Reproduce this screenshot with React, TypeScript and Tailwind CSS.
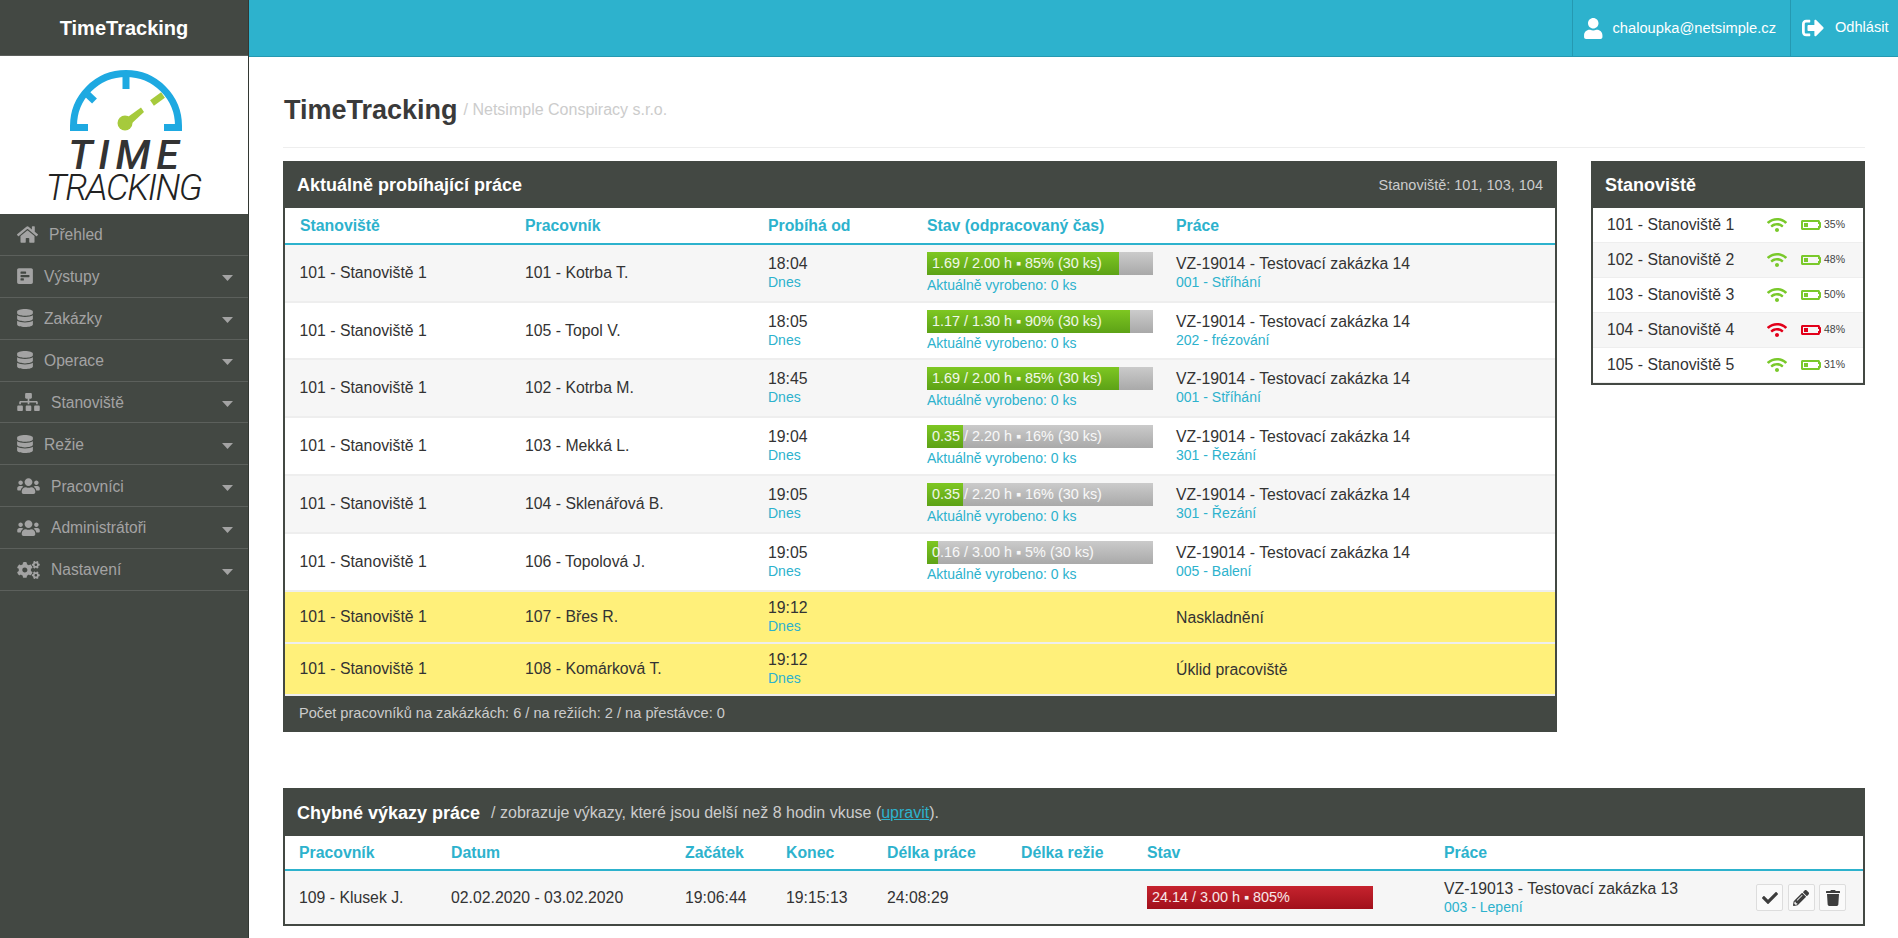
import React from "react";
import { FaHome, FaPollH, FaDatabase, FaSitemap, FaUsers, FaCogs, FaUser, FaSignOutAlt, FaWifi, FaBatteryQuarter, FaCheck, FaPencilAlt, FaTrash } from "react-icons/fa";

const menu: { label: string; Icon: React.ComponentType<{ className?: string }>; iconClass: string; caret: boolean }[] = [
  { label: "Přehled", Icon: FaHome, iconClass: "w-[21px] h-[19px]", caret: false },
  { label: "Výstupy", Icon: FaPollH, iconClass: "w-[16px] h-[18px]", caret: true },
  { label: "Zakázky", Icon: FaDatabase, iconClass: "w-[16px] h-[18px]", caret: true },
  { label: "Operace", Icon: FaDatabase, iconClass: "w-[16px] h-[18px]", caret: true },
  { label: "Stanoviště", Icon: FaSitemap, iconClass: "w-[23px] h-[18px]", caret: true },
  { label: "Režie", Icon: FaDatabase, iconClass: "w-[16px] h-[18px]", caret: true },
  { label: "Pracovníci", Icon: FaUsers, iconClass: "w-[23px] h-[18px]", caret: true },
  { label: "Administrátoři", Icon: FaUsers, iconClass: "w-[23px] h-[18px]", caret: true },
  { label: "Nastavení", Icon: FaCogs, iconClass: "w-[23px] h-[18px]", caret: true },
];

type Row = { st: string; w: string; t: string; done?: string; pct?: number; job: string; op?: string; yellow?: boolean };
const rows: Row[] = [
  { st: "101 - Stanoviště 1", w: "101 - Kotrba T.", t: "18:04", done: "1.69 / 2.00 h ▪ 85% (30 ks)", pct: 85, job: "VZ-19014 - Testovací zakázka 14", op: "001 - Stříhání" },
  { st: "101 - Stanoviště 1", w: "105 - Topol V.", t: "18:05", done: "1.17 / 1.30 h ▪ 90% (30 ks)", pct: 90, job: "VZ-19014 - Testovací zakázka 14", op: "202 - frézování" },
  { st: "101 - Stanoviště 1", w: "102 - Kotrba M.", t: "18:45", done: "1.69 / 2.00 h ▪ 85% (30 ks)", pct: 85, job: "VZ-19014 - Testovací zakázka 14", op: "001 - Stříhání" },
  { st: "101 - Stanoviště 1", w: "103 - Mekká L.", t: "19:04", done: "0.35 / 2.20 h ▪ 16% (30 ks)", pct: 16, job: "VZ-19014 - Testovací zakázka 14", op: "301 - Řezání" },
  { st: "101 - Stanoviště 1", w: "104 - Sklenářová B.", t: "19:05", done: "0.35 / 2.20 h ▪ 16% (30 ks)", pct: 16, job: "VZ-19014 - Testovací zakázka 14", op: "301 - Řezání" },
  { st: "101 - Stanoviště 1", w: "106 - Topolová J.", t: "19:05", done: "0.16 / 3.00 h ▪ 5% (30 ks)", pct: 5, job: "VZ-19014 - Testovací zakázka 14", op: "005 - Balení" },
  { st: "101 - Stanoviště 1", w: "107 - Břes R.", t: "19:12", job: "Naskladnění", yellow: true },
  { st: "101 - Stanoviště 1", w: "108 - Komárková T.", t: "19:12", job: "Úklid pracoviště", yellow: true },
];

const stations = [
  { n: "101 - Stanoviště 1", p: "35%", bad: false },
  { n: "102 - Stanoviště 2", p: "48%", bad: false },
  { n: "103 - Stanoviště 3", p: "50%", bad: false },
  { n: "104 - Stanoviště 4", p: "48%", bad: true },
  { n: "105 - Stanoviště 5", p: "31%", bad: false },
];

function Logo() {
  return (
    <div className="h-[158px] bg-white flex flex-col items-center">
      <svg viewBox="0 0 112 62" className="w-[112px] h-[62px] mt-[14px] shrink-0 ml-[4px]">
        <path d="M18 57.5H3.5V56A52.5 52.5 0 0 1 108.5 56V57.5H94" fill="none" stroke="#1ea9e1" strokeWidth="7" />
        <rect x="52.5" y="4" width="7" height="15" fill="#1ea9e1" />
        <path d="M15 22L24.5 31" stroke="#1ea9e1" strokeWidth="7" />
        <path d="M82 33L93 25" stroke="#a6ca3c" strokeWidth="6.5" />
        <circle cx="55" cy="53" r="7.5" fill="#a6ca3c" />
        <path d="M55 49L71 37.5L74 42L60 55Z" fill="#a6ca3c" />
      </svg>
      <div className="font-['Roboto',sans-serif] italic font-medium text-[41px] leading-[33px] tracking-[6px] text-[#333] mt-[7px] ml-[5px]">TIME</div>
      <div className="font-['Roboto',sans-serif] italic font-light text-[36px] leading-[31px] tracking-[-1.5px] text-[#222] mt-[1px] -ml-[1px]">TRACKING</div>
    </div>
  );
}

function Bar({ text, pct, red }: { text: string; pct: number; red?: boolean }) {
  return (
    <div className="relative w-[226px] h-[23px] overflow-hidden bg-gradient-to-b from-[#cbcbcb] to-[#a9a9a9] text-[14.4px] leading-[23px] text-white/90 whitespace-nowrap">
      <div
        className={red ? "absolute inset-y-0 left-0 bg-gradient-to-b from-[#c6232e] to-[#a1101b]" : "absolute inset-y-0 left-0 bg-gradient-to-b from-[#7ec722] to-[#5da216]"}
        style={{ width: pct + "%" }}
      />
      <span className="relative pl-[5px]">{text}</span>
    </div>
  );
}

function ActionButton({ children }: { children: React.ReactNode }) {
  return <div className="w-[27px] h-[27px] bg-[#fafafa] border border-[#ddd] rounded-[2px] flex items-center justify-center text-[#3d3d3d]">{children}</div>;
}

const th = "text-left font-bold text-[15.8px] text-[#2db2cd] border-b-[2px] border-[#2db2cd] align-middle p-0";

export default function App() {
  return (
    <div className="h-[938px] w-full flex overflow-hidden bg-white font-['Liberation_Sans',Arial,sans-serif] text-[15.8px] text-[#333]">
      <aside className="w-[249px] shrink-0 bg-[#434843] border-r border-[#333833] flex flex-col">
        <div className="h-[56px] shrink-0 flex items-center justify-center border-b border-[#5c5f5c] text-white font-bold text-[20px]">TimeTracking</div>
        <Logo />
        <nav className="flex flex-col">
          {menu.map((m) => (
            <div key={m.label} className="h-[41.9px] pl-[17px] pr-[15px] flex items-center border-b border-[#5c605c] text-[#a3a3a3] text-[15.6px]">
              <m.Icon className={m.iconClass + " shrink-0"} />
              <span className="ml-[11px] pt-[1px]">{m.label}</span>
              {m.caret && (
                <svg viewBox="0 0 11 6" className="w-[11px] h-[6px] ml-auto mt-[4px] shrink-0">
                  <path d="M0 0H11L5.5 6Z" fill="#a3a3a3" />
                </svg>
              )}
            </div>
          ))}
        </nav>
      </aside>

      <div className="flex-1 min-w-0 flex flex-col">
        <header className="h-[57px] shrink-0 bg-[#2db2cd] border-b border-[#2599b1] flex justify-end text-white">
          <div className="w-[218px] border-l border-[#2599b1] flex items-center pl-[11px] text-[14.7px]">
            <FaUser className="w-[18.5px] h-[21px]" />
            <span className="ml-[10px]">chaloupka@netsimple.cz</span>
          </div>
          <div className="w-[108px] border-l border-[#2599b1] flex items-center pl-[11px] text-[14.6px]">
            <FaSignOutAlt className="w-[22px] h-[22px]" />
            <span className="ml-[11px]">Odhlásit</span>
          </div>
        </header>

        <main className="pl-[34px] pr-[33px]">
          <div className="h-[91px] border-b border-[#eee] flex items-center pt-[15px] pl-[1px] whitespace-nowrap">
            <span className="font-bold text-[27px] leading-[36px] text-[#3a3a3a]">TimeTracking</span>
            <span className="ml-[6px] text-[16px] text-[#ccc]">/ Netsimple Conspiracy s.r.o.</span>
          </div>

          <div className="flex justify-between mt-[13px] items-start">
            <section className="w-[1274px] border-x-[2px] border-[#434843] bg-white">
              <div className="h-[47px] bg-[#434843] -mx-[2px] px-[14px] pt-[2px] flex items-center justify-between">
                <span className="font-bold text-[18px] text-white">Aktuálně probíhající práce</span>
                <span className="text-[14.5px] text-[#ccc]">Stanoviště: 101, 103, 104</span>
              </div>
              <table className="w-full table-fixed border-collapse">
                <colgroup>
                  <col className="w-[225px]" />
                  <col className="w-[243px]" />
                  <col className="w-[159px]" />
                  <col className="w-[249px]" />
                  <col />
                </colgroup>
                <thead>
                  <tr className="h-[36px]">
                    {["Stanoviště", "Pracovník", "Probíhá od", "Stav (odpracovaný čas)", "Práce"].map((h) => (
                      <th key={h} className={th + " pl-[15px]"}>{h}</th>
                    ))}
                  </tr>
                </thead>
                <tbody>
                  {rows.map((r, i) => (
                    <tr
                      key={i}
                      className={
                        (r.yellow ? "bg-[#fff07a] h-[52px] " : (i % 2 === 0 ? "bg-[#f6f6f6] " : "bg-white ") + (i === 1 ? "h-[57px] " : "h-[58px] ")) + "border-b-[2px] border-[#eeeeee]"
                      }
                    >
                      <td className="pl-[14.5px] p-0">{r.st}</td>
                      <td className="pl-[15px] p-0">{r.w}</td>
                      <td className="pl-[15px] p-0 leading-[19px]">
                        <div>{r.t}</div>
                        <div className="text-[14px] text-[#2db2cd]">Dnes</div>
                      </td>
                      <td className="pl-[15px] p-0">
                        {r.done && (
                          <>
                            <Bar text={r.done} pct={r.pct!} />
                            <div className="text-[14px] leading-[18px] text-[#2db2cd] mt-[1px]">Aktuálně vyrobeno: 0 ks</div>
                          </>
                        )}
                      </td>
                      <td className="pl-[15px] p-0 leading-[19px]">
                        <div>{r.job}</div>
                        {r.op && <div className="text-[14px] text-[#2db2cd]">{r.op}</div>}
                      </td>
                    </tr>
                  ))}
                </tbody>
              </table>
              <div className="h-[36px] bg-[#434843] -mx-[2px] px-[16px] pb-[1px] flex items-center text-[14.6px] text-[#ccc]">
                Počet pracovníků na zakázkách: 6 / na režiích: 2 / na přestávce: 0
              </div>
            </section>

            <section className="w-[274px] border-x-[2px] border-b-[2px] border-[#434843] bg-white">
              <div className="h-[47px] bg-[#434843] -mx-[2px] px-[14px] pt-[2px] flex items-center font-bold text-[18px] text-white">Stanoviště</div>
              {stations.map((s, i) => (
                <div key={s.n} className={(i % 2 === 1 ? "bg-[#f6f6f6] " : "bg-white ") + "h-[35px] pl-[14px] flex items-center border-b-[1px] border-[#eee]"}>
                  <span className="w-[160px] shrink-0">{s.n}</span>
                  <FaWifi className={(s.bad ? "text-[#e2001a] " : "text-[#7ac92b] ") + "w-[20px] h-[16px] shrink-0"} />
                  <FaBatteryQuarter className={(s.bad ? "text-[#e2001a] " : "text-[#7ac92b] ") + "w-[20px] h-[16px] shrink-0 ml-[14px]"} />
                  <span className="text-[10.5px] ml-[3px] text-[#444]">{s.p}</span>
                </div>
              ))}
            </section>
          </div>

          <section className="mt-[56px] border-x-[2px] border-b-[2px] border-[#434843] bg-white">
            <div className="h-[48px] bg-[#434843] -mx-[2px] px-[14px] pt-[2px] flex items-center whitespace-nowrap">
              <span className="font-bold text-[18px] text-white">Chybné výkazy práce</span>
              <span className="ml-[11px] text-[16px] text-[#ccc]">
                / zobrazuje výkazy, které jsou delší než 8 hodin vkuse (<a className="text-[#2db2cd] underline">upravit</a>).
              </span>
            </div>
            <table className="w-full table-fixed border-collapse">
              <colgroup>
                <col className="w-[153px]" />
                <col className="w-[234px]" />
                <col className="w-[101px]" />
                <col className="w-[101px]" />
                <col className="w-[134px]" />
                <col className="w-[126px]" />
                <col className="w-[297px]" />
                <col className="w-[325px]" />
                <col />
              </colgroup>
              <thead>
                <tr className="h-[34px]">
                  {["Pracovník", "Datum", "Začátek", "Konec", "Délka práce", "Délka režie", "Stav", "Práce"].map((h, i) => (
                    <th key={i} className={th + (i === 0 ? " pl-[14px]" : " pl-[13px]") + " pt-[1px]"}>{h}</th>
                  ))}
                  <th className={th}></th>
                </tr>
              </thead>
              <tbody>
                <tr className="h-[54px] bg-[#f6f6f6]">
                  <td className="pl-[14px] p-0">109 - Klusek J.</td>
                  <td className="pl-[13px] p-0">02.02.2020 - 03.02.2020</td>
                  <td className="pl-[13px] p-0">19:06:44</td>
                  <td className="pl-[13px] p-0">19:15:13</td>
                  <td className="pl-[13px] p-0">24:08:29</td>
                  <td className="pl-[13px] p-0"></td>
                  <td className="pl-[13px] p-0"><Bar text="24.14 / 3.00 h ▪ 805%" pct={100} red /></td>
                  <td className="pl-[13px] p-0 leading-[19px] whitespace-nowrap">
                    <div>VZ-19013 - Testovací zakázka 13</div>
                    <div className="text-[14px] text-[#2db2cd]">003 - Lepení</div>
                  </td>
                  <td className="p-0">
                    <div className="flex gap-[4.5px]">
                      <ActionButton><FaCheck className="w-[16px] h-[16px]" /></ActionButton>
                      <ActionButton><FaPencilAlt className="w-[16px] h-[16px]" /></ActionButton>
                      <ActionButton><FaTrash className="w-[14px] h-[16px]" /></ActionButton>
                    </div>
                  </td>
                </tr>
              </tbody>
            </table>
          </section>
        </main>
      </div>
    </div>
  );
}
